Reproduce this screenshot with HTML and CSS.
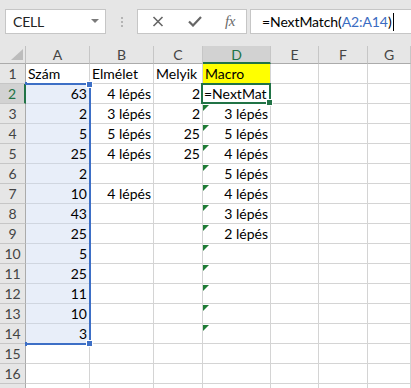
FILE: index.html
```html
<!DOCTYPE html>
<html>
<head>
<meta charset="utf-8">
<link rel="stylesheet" href="styles.css">
</head>
<body>
<div class="app">
  <div class="toolbar">
    <div class="namebox">
      <span class="nb-text">CELL</span>
      <svg class="dd" width="8" height="5" viewBox="0 0 8 5"><polygon points="0,0 8,0 4,4" fill="#7a7a7a"/></svg>
    </div>
    <div class="grip"><i></i><i></i><i></i></div>
    <div class="fbtns">
      <svg class="ico" width="12" height="11" viewBox="0 0 12 11"><path d="M1.5 1 L10.5 10 M10.5 1 L1.5 10" stroke="#666" stroke-width="1.6" fill="none"/></svg>
      <svg class="ico" width="14" height="11" viewBox="0 0 14 11"><path d="M1 5.5 L5 9.5 L13 1" stroke="#666" stroke-width="2.2" fill="none"/></svg>
      <span class="fx">fx</span>
    </div>
    <div class="finput"><span>=NextMatch(</span><span class="ref">A2:A14</span><span>)</span><span class="caret"></span></div>
  </div>
  <div class="sheet">
    <div class="corner"><svg width="12" height="11" viewBox="0 0 12 11"><polygon points="12,0 12,11 0,11" fill="#bcbcbc"/></svg></div>
    <div class="ch">A</div><div class="ch">B</div><div class="ch">C</div><div class="ch act-c">D</div><div class="ch">E</div><div class="ch">F</div><div class="ch">G</div>

    <div class="rh">1</div><div class="c">Szám</div><div class="c">Elmélet</div><div class="c">Melyik</div><div class="c yel">Macro</div><div class="c"></div><div class="c"></div><div class="c"></div>
    <div class="rh act-r">2</div><div class="c rng r">63</div><div class="c r">4 lépés</div><div class="c r">2</div><div class="c edit">=NextMat</div><div class="c"></div><div class="c"></div><div class="c"></div>
    <div class="rh">3</div><div class="c rng r">2</div><div class="c r">3 lépés</div><div class="c r">2</div><div class="c r err">3 lépés</div><div class="c"></div><div class="c"></div><div class="c"></div>
    <div class="rh">4</div><div class="c rng r">5</div><div class="c r">5 lépés</div><div class="c r">25</div><div class="c r err">5 lépés</div><div class="c"></div><div class="c"></div><div class="c"></div>
    <div class="rh">5</div><div class="c rng r">25</div><div class="c r">4 lépés</div><div class="c r">25</div><div class="c r err">4 lépés</div><div class="c"></div><div class="c"></div><div class="c"></div>
    <div class="rh">6</div><div class="c rng r">2</div><div class="c r"></div><div class="c r"></div><div class="c r err">5 lépés</div><div class="c"></div><div class="c"></div><div class="c"></div>
    <div class="rh">7</div><div class="c rng r">10</div><div class="c r">4 lépés</div><div class="c r"></div><div class="c r err">4 lépés</div><div class="c"></div><div class="c"></div><div class="c"></div>
    <div class="rh">8</div><div class="c rng r">43</div><div class="c r"></div><div class="c r"></div><div class="c r err">3 lépés</div><div class="c"></div><div class="c"></div><div class="c"></div>
    <div class="rh">9</div><div class="c rng r">25</div><div class="c r"></div><div class="c r"></div><div class="c r err">2 lépés</div><div class="c"></div><div class="c"></div><div class="c"></div>
    <div class="rh">10</div><div class="c rng r">5</div><div class="c"></div><div class="c"></div><div class="c err"></div><div class="c"></div><div class="c"></div><div class="c"></div>
    <div class="rh">11</div><div class="c rng r">25</div><div class="c"></div><div class="c"></div><div class="c err"></div><div class="c"></div><div class="c"></div><div class="c"></div>
    <div class="rh">12</div><div class="c rng r">11</div><div class="c"></div><div class="c"></div><div class="c err"></div><div class="c"></div><div class="c"></div><div class="c"></div>
    <div class="rh">13</div><div class="c rng r">10</div><div class="c"></div><div class="c"></div><div class="c err"></div><div class="c"></div><div class="c"></div><div class="c"></div>
    <div class="rh">14</div><div class="c rng r">3</div><div class="c"></div><div class="c"></div><div class="c err"></div><div class="c"></div><div class="c"></div><div class="c"></div>
    <div class="rh">15</div><div class="c"></div><div class="c"></div><div class="c"></div><div class="c"></div><div class="c"></div><div class="c"></div><div class="c"></div>
    <div class="rh">16</div><div class="c"></div><div class="c"></div><div class="c"></div><div class="c"></div><div class="c"></div><div class="c"></div><div class="c"></div>
    <div class="rh"></div><div class="c"></div><div class="c"></div><div class="c"></div><div class="c"></div><div class="c"></div><div class="c"></div><div class="c"></div>

    <div class="range-box">
      <span class="h h-tl"></span><span class="h h-tr"></span><span class="h h-bl"></span><span class="h h-br"></span>
    </div>
    <div class="active-box"><span class="fill-h"></span></div>
  </div>
</div>
</body>
</html>
```

FILE: styles.css
```css
html, body {
  margin: 0;
  padding: 0;
  background: #ffffff;
}
body {
  width: 411px;
  height: 388px;
  overflow: hidden;
  font-family: Lato, "Liberation Sans", sans-serif;
  color: #000;
}
.app {
  display: flex;
  flex-direction: column;
}
.toolbar {
  height: 46px;
  box-sizing: border-box;
  background: #e6e6e6;
  display: flex;
  align-items: flex-start;
  padding: 9px 0 0 5px;
}
.namebox {
  width: 101px;
  height: 25px;
  box-sizing: border-box;
  background: #fff;
  border: 1px solid #c6c6c6;
  display: flex;
  align-items: center;
  justify-content: space-between;
  padding: 0 6px 0 7px;
}
.nb-text {
  font-size: 14px;
  color: #222;
  letter-spacing: -0.2px;
}
.dd {
  display: block;
}
.grip {
  width: 31px;
  height: 25px;
  display: flex;
  flex-direction: column;
  align-items: center;
  justify-content: center;
  gap: 2px;
}
.grip i {
  display: block;
  width: 2px;
  height: 2px;
  background: #b4b4b4;
}
.fbtns {
  width: 110px;
  height: 25px;
  box-sizing: border-box;
  background: #fff;
  border: 1px solid #c6c6c6;
  display: flex;
  align-items: center;
  padding-left: 14px;
  gap: 24px;
}
.ico {
  display: block;
}
.fx {
  font-family: "Liberation Serif", serif;
  font-style: italic;
  font-size: 15px;
  color: #6a6a6a;
  margin-left: -1px;
  letter-spacing: -0.5px;
}
.finput {
  flex: 1;
  height: 25px;
  margin-left: 3px;
  box-sizing: border-box;
  background: #fff;
  border: 1px solid #c6c6c6;
  border-right: 0;
  display: flex;
  align-items: center;
  padding-left: 11px;
  font-size: 14px;
  letter-spacing: -0.1px;
  color: #000;
}
.ref {
  color: #3a6cc2;
}
.caret {
  display: inline-block;
  width: 1px;
  height: 18px;
  background: #000;
  margin-left: 1px;
}
.sheet {
  position: relative;
  display: grid;
  grid-template-columns: 26px 64px 64px 49px 68px 48px 49px 1fr;
  grid-template-rows: 18px repeat(17, 20px);
  font-size: 14px;
}
.corner {
  background: #e6e6e6;
  border-right: 1px solid #c0c0c0;
  border-bottom: 1px solid #ababab;
  box-sizing: border-box;
  display: flex;
  align-items: flex-end;
  justify-content: flex-end;
  padding: 0 2px 3px 0;
}
.corner svg {
  display: block;
}
.ch {
  background: #e6e6e6;
  border-right: 1px solid #c6c6c6;
  border-bottom: 1px solid #ababab;
  box-sizing: border-box;
  text-align: center;
  line-height: 17px;
  color: #444;
  font-size: 14px;
}
.ch.act-c {
  background: #d2d2d2;
  color: #217346;
  border-bottom: 2px solid #217346;
}
.rh {
  background: #e6e6e6;
  border-right: 1px solid #ababab;
  border-bottom: 1px solid #c6c6c6;
  box-sizing: border-box;
  text-align: center;
  line-height: 19px;
  color: #444;
  font-size: 14px;
}
.rh.act-r {
  background: #d2d2d2;
  color: #217346;
  border-right: 2px solid #217346;
}
.c {
  position: relative;
  border-right: 1px solid #d4d4d4;
  border-bottom: 1px solid #d4d4d4;
  box-sizing: border-box;
  line-height: 19px;
  padding: 0 2px 0 2px;
  white-space: nowrap;
  overflow: hidden;
}
.c.r {
  text-align: right;
}
.c.rng {
  background: #e8eef9;
  border-bottom-color: #d0d6e0;
}
.c.yel {
  background: #ffff00;
}
.c.edit {
  overflow: hidden;
  padding-left: 1px;
}
.c.err::before {
  content: "";
  position: absolute;
  left: 0;
  top: 1px;
  width: 0;
  height: 0;
  border-top: 6px solid #1e7b35;
  border-right: 6px solid transparent;
}
.range-box {
  position: absolute;
  grid-row: 3 / 16;
  grid-column: 2 / 3;
  top: -1px;
  left: 0;
  right: -1px;
  bottom: -1px;
  border: 2px solid #3d6fc6;
  border-left: 0;
  pointer-events: none;
}
.h {
  position: absolute;
  width: 5px;
  height: 5px;
  background: #3d6fc6;
  border: 1px solid #fff;
}
.h-tr { right: -4px; top: -4px; }
.h-br { right: -4px; bottom: -4px; }
.h-tl { left: -1px; top: -3px; width: 2px; height: 3px; border: 0; }
.h-bl { left: -1px; bottom: -3px; width: 2px; height: 4px; border: 0; }
.active-box {
  position: absolute;
  grid-row: 3 / 4;
  grid-column: 5 / 6;
  top: -1px;
  left: -2px;
  right: 0;
  bottom: 0;
  border: 2px solid #217346;
  pointer-events: none;
}
.fill-h {
  position: absolute;
  right: -4px;
  bottom: -4px;
  width: 5px;
  height: 5px;
  background: #217346;
  border: 1px solid #fff;
}
```
